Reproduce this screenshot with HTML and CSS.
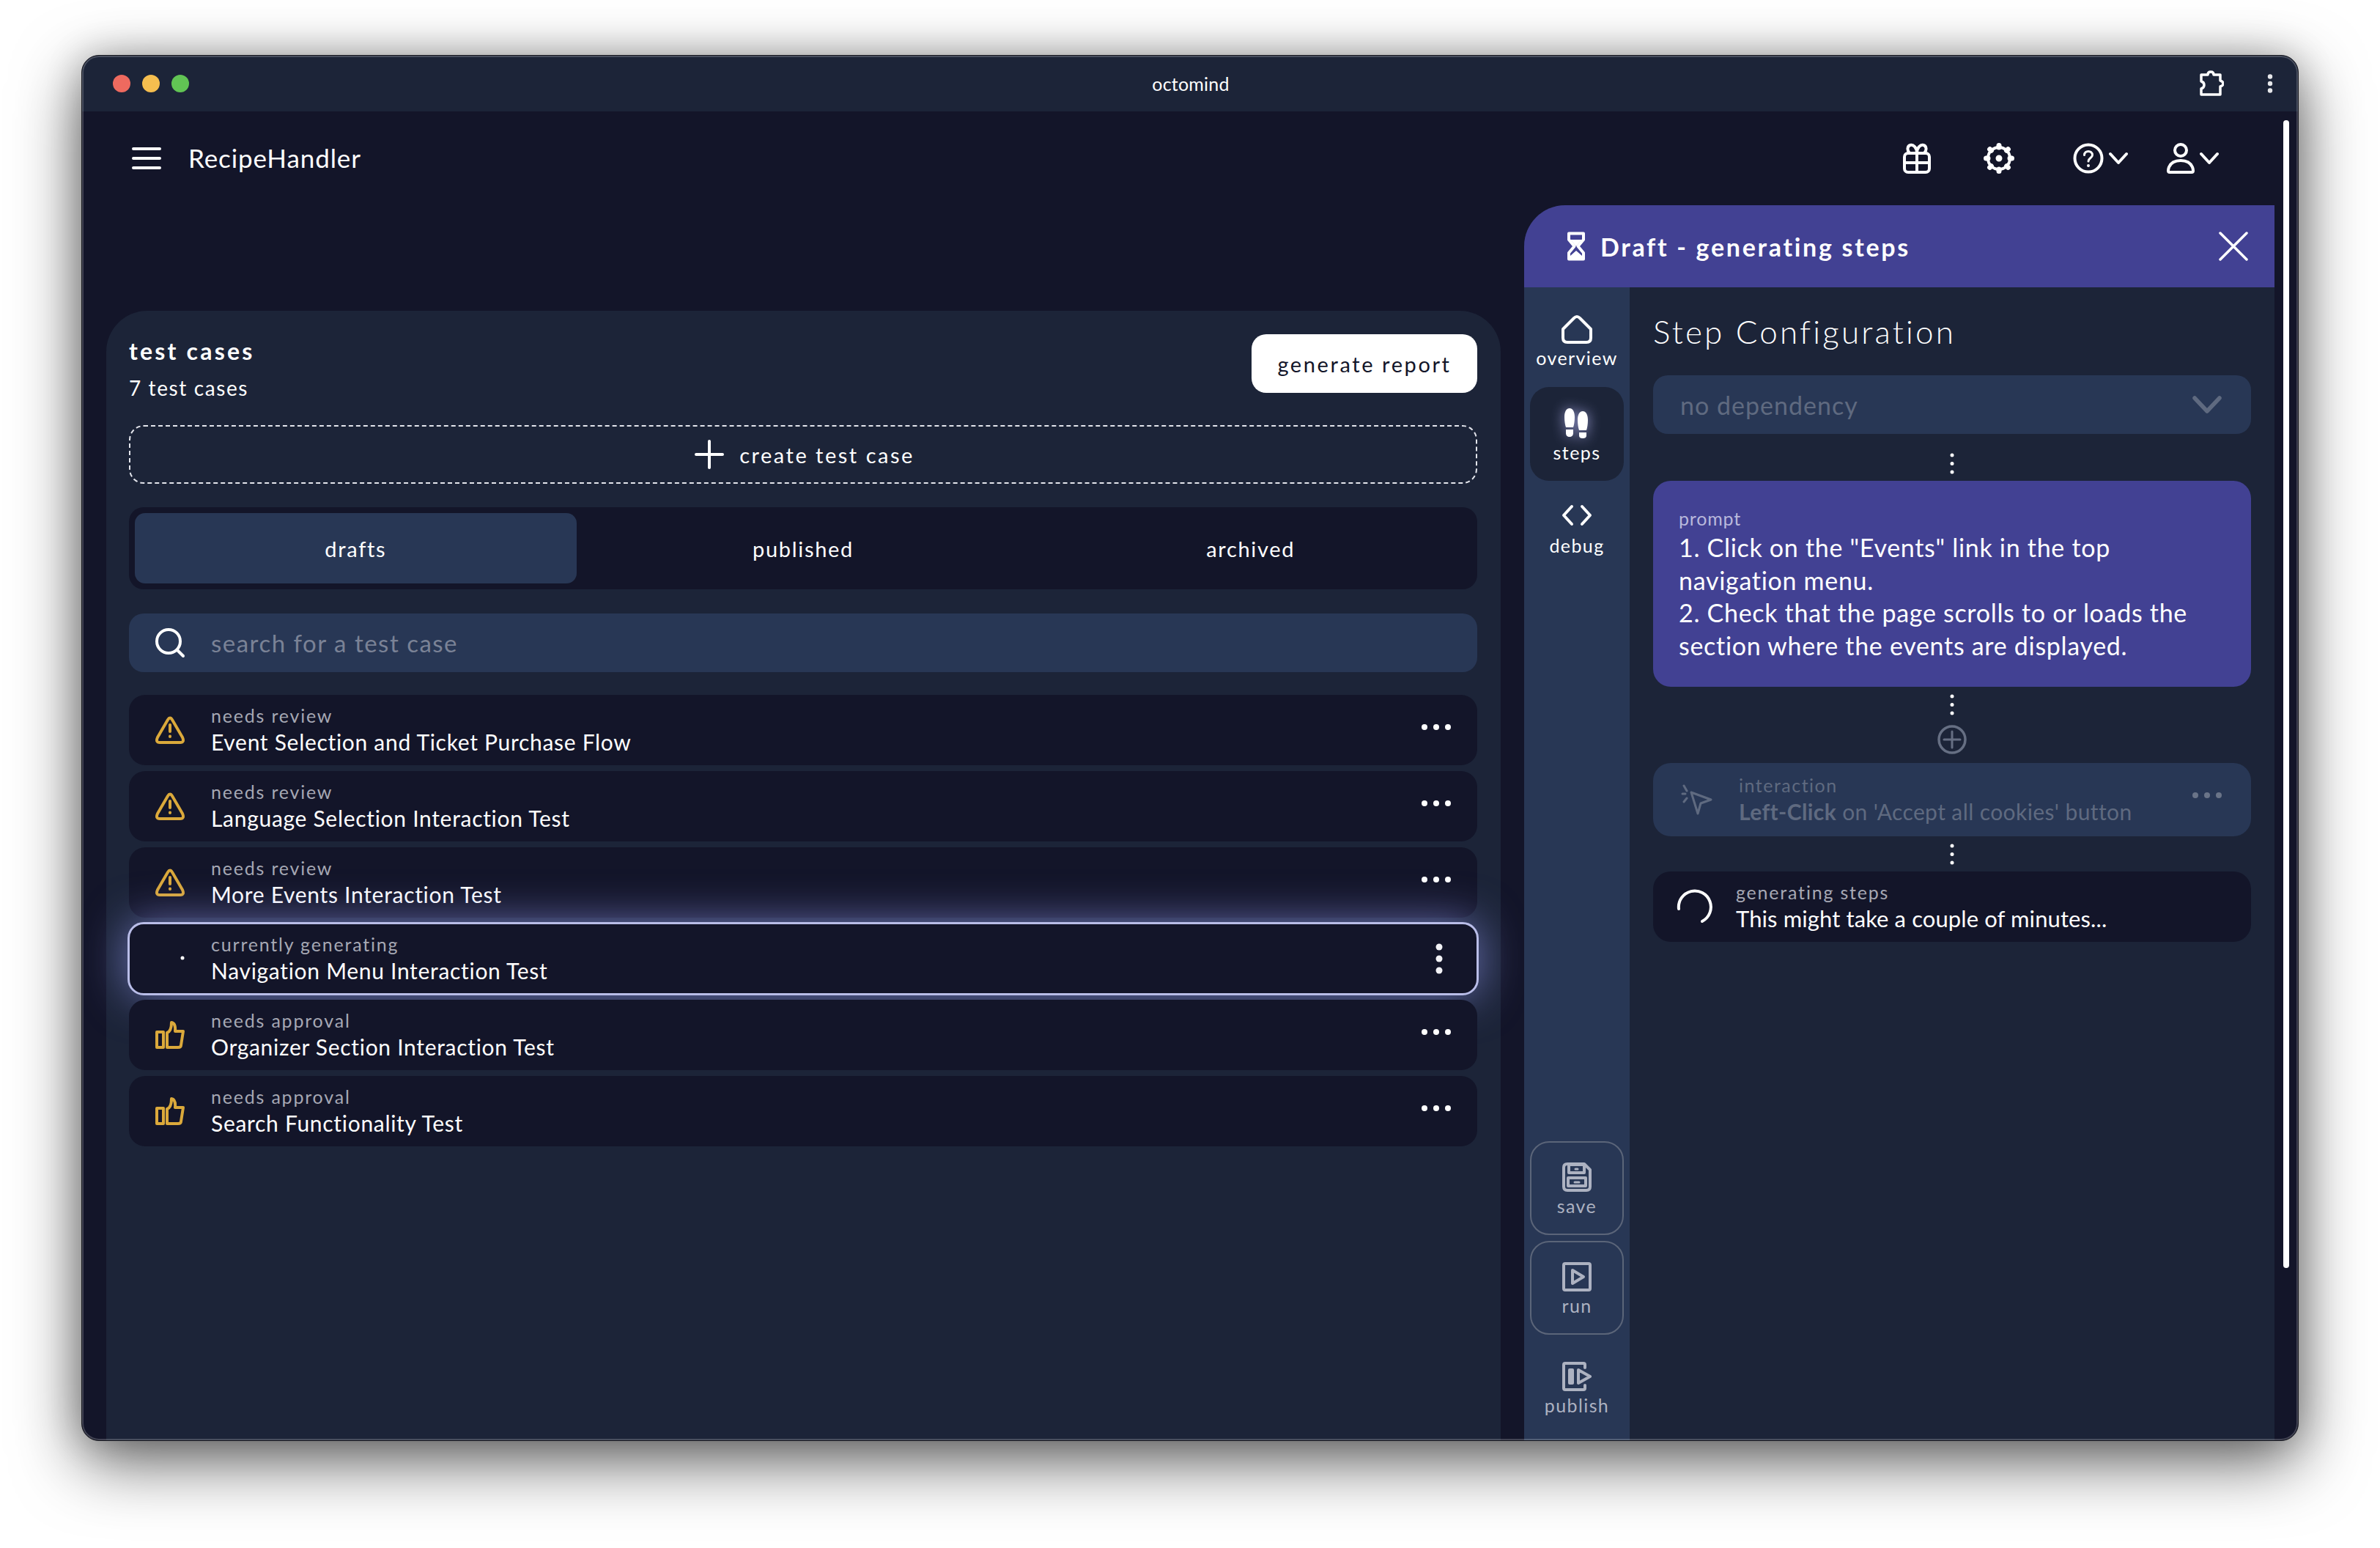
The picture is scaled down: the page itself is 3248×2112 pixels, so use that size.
FILE: index.html
```html
<!DOCTYPE html>
<html lang="en">
<head>
<meta charset="utf-8">
<title>octomind</title>
<link rel="stylesheet" href="styles.css">
</head>
<body>
<div class="window">
  <div class="titlebar">
    <div class="lights"><span class="light red"></span><span class="light yellow"></span><span class="light green"></span></div>
    <div class="win-title">octomind</div>
    <div class="win-tools">
      <svg class="ic puzzle" width="34" height="36" viewBox="0 0 34 36"><path d="M3 6H12Q12 2 16 2T20 6H29V14Q33 15 33 18T29 22V33H3V25Q7 24 7 20T3 15Z"/></svg>
      <svg class="vdots" width="8" height="26" viewBox="0 0 8 26"><circle cx="4" cy="3.5" r="3.2"/><circle cx="4" cy="13" r="3.2"/><circle cx="4" cy="22.5" r="3.2"/></svg>
    </div>
  </div>
  <div class="scrollbar"></div>
  <header class="appbar">
    <svg class="ic hamburger" width="40" height="32" viewBox="0 0 40 32"><path d="M2 3H38M2 16H38M2 29H38"/></svg>
    <div class="app-name">RecipeHandler</div>
    <div class="app-tools">
      <svg class="ic gift" width="38" height="42" viewBox="0 0 38 42"><rect x="2" y="14" width="34" height="26" rx="5"/><path d="M2 27H36M19 14V40M19 14C19 6 14 2 10 3C6 4 5 10 9 14M19 14C19 6 24 2 28 3C32 4 33 10 29 14"/></svg>
      <svg class="ic gear" width="42" height="42" viewBox="0 0 42 42"><circle cx="21" cy="21" r="15"/><circle class="solid" cx="21" cy="21" r="3.500"/><path class="teeth" d="M21 3.500V6M21 38.500V36M3.500 21H6M38.500 21H36M8.600 8.600L10.400 10.400M33.400 33.400L31.600 31.600M8.600 33.400L10.400 31.600M33.400 8.600L31.600 10.400"/></svg>
      <div class="tool-group help">
        <svg class="ic" width="42" height="42" viewBox="0 0 42 42"><circle cx="21" cy="21" r="18.500"/><path class="thin" d="M15.500 16.500C15.500 9.500 26.500 10 26.500 16.500C26.500 20.500 21 20.500 21 25"/><circle class="solid" cx="21" cy="31" r="1"/></svg>
        <svg class="ic chev" width="26" height="18" viewBox="0 0 26 18"><path d="M2 3L13 15L24 3"/></svg>
      </div>
      <div class="tool-group">
        <svg class="ic" width="38" height="42" viewBox="0 0 38 42"><circle cx="19" cy="10" r="8"/><path d="M4 40C1 40 2 36 3 33C6 26 12 24 19 24S32 26 35 33C36 36 37 40 34 40Z"/></svg>
        <svg class="ic chev" width="26" height="18" viewBox="0 0 26 18"><path d="M2 3L13 15L24 3"/></svg>
      </div>
    </div>
  </header>
  <main class="main">
    <section class="cases">
      <div class="cases-head">
        <div>
          <h1 class="cases-title">test cases</h1>
          <p class="cases-count">7 test cases</p>
        </div>
        <button class="btn-report">generate report</button>
      </div>
      <div class="create">
        <svg class="ic plus" width="40" height="40" viewBox="0 0 40 40"><path d="M20 2V38M2 20H38"/></svg>
        <span>create test case</span>
      </div>
      <div class="tabs">
        <div class="tab active">drafts</div>
        <div class="tab">published</div>
        <div class="tab">archived</div>
      </div>
      <div class="search">
        <svg class="ic" width="42" height="42" viewBox="0 0 42 42"><circle cx="19" cy="19" r="16"/><path d="M31 31L39 39"/></svg>
        <span>search for a test case</span>
      </div>
      <div class="rows">
        <div class="row">
          <svg class="ic status" width="40" height="38" viewBox="0 0 40 38"><path d="M17 5L3 29Q0 36 6 36H34Q40 36 37 29L23 5Q20 0 17 5Z"/><path d="M20 12V21M20 27.500V28"/></svg>
          <div class="row-text"><div class="row-label">needs review</div><div class="row-title">Event Selection and Ticket Purchase Flow</div></div>
          <svg class="hdots" width="40" height="8" viewBox="0 0 40 8"><circle cx="4" cy="4" r="4"/><circle cx="20" cy="4" r="4"/><circle cx="36" cy="4" r="4"/></svg>
        </div>
        <div class="row">
          <svg class="ic status" width="40" height="38" viewBox="0 0 40 38"><path d="M17 5L3 29Q0 36 6 36H34Q40 36 37 29L23 5Q20 0 17 5Z"/><path d="M20 12V21M20 27.500V28"/></svg>
          <div class="row-text"><div class="row-label">needs review</div><div class="row-title">Language Selection Interaction Test</div></div>
          <svg class="hdots" width="40" height="8" viewBox="0 0 40 8"><circle cx="4" cy="4" r="4"/><circle cx="20" cy="4" r="4"/><circle cx="36" cy="4" r="4"/></svg>
        </div>
        <div class="row">
          <svg class="ic status" width="40" height="38" viewBox="0 0 40 38"><path d="M17 5L3 29Q0 36 6 36H34Q40 36 37 29L23 5Q20 0 17 5Z"/><path d="M20 12V21M20 27.500V28"/></svg>
          <div class="row-text"><div class="row-label">needs review</div><div class="row-title">More Events Interaction Test</div></div>
          <svg class="hdots" width="40" height="8" viewBox="0 0 40 8"><circle cx="4" cy="4" r="4"/><circle cx="20" cy="4" r="4"/><circle cx="36" cy="4" r="4"/></svg>
        </div>
        <div class="row current">
          <svg class="status speck" width="40" height="38" viewBox="0 0 40 38"><circle cx="37" cy="18" r="2.500"/></svg>
          <div class="row-text"><div class="row-label">currently generating</div><div class="row-title">Navigation Menu Interaction Test</div></div>
          <svg class="vdots-row" width="10" height="42" viewBox="0 0 10 42"><circle cx="5" cy="5" r="4.500"/><circle cx="5" cy="21" r="4.500"/><circle cx="5" cy="37" r="4.500"/></svg>
        </div>
        <div class="row">
          <svg class="ic status" width="40" height="38" viewBox="0 0 40 38"><rect x="2" y="15" width="9" height="21"/><path d="M16 36V16Q22 14 22 2Q28 3 27 14H38L35 33Q35 36 31 36Z"/></svg>
          <div class="row-text"><div class="row-label">needs approval</div><div class="row-title">Organizer Section Interaction Test</div></div>
          <svg class="hdots" width="40" height="8" viewBox="0 0 40 8"><circle cx="4" cy="4" r="4"/><circle cx="20" cy="4" r="4"/><circle cx="36" cy="4" r="4"/></svg>
        </div>
        <div class="row">
          <svg class="ic status" width="40" height="38" viewBox="0 0 40 38"><rect x="2" y="15" width="9" height="21"/><path d="M16 36V16Q22 14 22 2Q28 3 27 14H38L35 33Q35 36 31 36Z"/></svg>
          <div class="row-text"><div class="row-label">needs approval</div><div class="row-title">Search Functionality Test</div></div>
          <svg class="hdots" width="40" height="8" viewBox="0 0 40 8"><circle cx="4" cy="4" r="4"/><circle cx="20" cy="4" r="4"/><circle cx="36" cy="4" r="4"/></svg>
        </div>
      </div>
    </section>
    <aside class="panel">
      <div class="panel-head">
        <svg class="hourglass" width="26" height="40" viewBox="0 0 26 40"><path class="hg-line" d="M3 2.500H23V11L15.500 20L23 29V37.500H3V29L10.500 20L3 11Z"/><path d="M5 11H21L13 20ZM5 37V33L13 26L21 33V37Z"/></svg>
        <div class="panel-title">Draft - generating steps</div>
        <svg class="ic close" width="40" height="40" viewBox="0 0 40 40"><path d="M2 2L38 38M38 2L2 38"/></svg>
      </div>
      <div class="panel-body">
        <nav class="rail">
          <div class="rail-group">
            <div class="rail-item">
              <svg class="ic" width="42" height="40" viewBox="0 0 42 40"><path d="M2 20L17 5Q21 1 25 5L40 20V32Q40 38 34 38H8Q2 38 2 32Z"/></svg>
              <span>overview</span>
            </div>
            <div class="rail-item selected">
              <svg class="feet" width="36" height="42" viewBox="0 0 36 42"><path d="M1 13C1 5 4 1 8 1S15 5 15 13C15 19 14 24 13 27H3C2 24 1 19 1 13ZM3 30H13V35C13 38 11 40 8 40S3 38 3 35Z"/><path d="M19 17C19 9 22 5 26 5S33 9 33 17C33 23 32 28 31 31H21C20 28 19 23 19 17ZM21 34H31V38C31 41 29 42 26 42S21 41 21 38Z"/></svg>
              <span>steps</span>
            </div>
            <div class="rail-item">
              <svg class="ic" width="42" height="40" viewBox="0 0 42 40"><path d="M14 6L3 18L14 30M28 6L39 18L28 30"/></svg>
              <span>debug</span>
            </div>
          </div>
          <div class="rail-group bottom">
            <div class="rail-item boxed">
              <svg class="ic" width="40" height="40" viewBox="0 0 40 40"><path d="M7 2H30L38 10V33Q38 38 33 38H7Q2 38 2 33V7Q2 2 7 2Z"/><rect x="9" y="3" width="21" height="11"/><rect x="8" y="21" width="24" height="11"/><path class="thin" d="M18 9H21M17 27H23"/></svg>
              <span>save</span>
            </div>
            <div class="rail-item boxed">
              <svg class="ic" width="40" height="40" viewBox="0 0 40 40"><rect x="2" y="2" width="36" height="36" rx="2"/><path d="M14 11L29 20L14 29Z"/></svg>
              <span>run</span>
            </div>
            <div class="rail-item muted">
              <svg class="ic" width="40" height="40" viewBox="0 0 40 40"><path d="M31 8V4Q31 2 29 2H4Q2 2 2 4V36Q2 38 4 38H29Q31 38 31 36V32"/><path d="M10 11H14V29H10ZM22 11L38 20L22 29Z"/></svg>
              <span>publish</span>
            </div>
          </div>
        </nav>
        <div class="config">
          <h2 class="config-title">Step Configuration</h2>
          <div class="select">
            <span>no dependency</span>
            <svg class="ic" width="40" height="24" viewBox="0 0 40 24"><path d="M3 3L20 21L37 3"/></svg>
          </div>
          <svg class="link first" width="6" height="29" viewBox="0 0 6 29"><circle cx="3" cy="3" r="2.500"/><circle cx="3" cy="14.500" r="2.500"/><circle cx="3" cy="26" r="2.500"/></svg>
          <div class="prompt">
            <div class="prompt-label">prompt</div>
            <div class="prompt-text">1. Click on the "Events" link in the top<br>navigation menu.<br>2. Check that the page scrolls to or loads the<br>section where the events are displayed.</div>
          </div>
          <svg class="link" width="6" height="29" viewBox="0 0 6 29"><circle cx="3" cy="3" r="2.500"/><circle cx="3" cy="14.500" r="2.500"/><circle cx="3" cy="26" r="2.500"/></svg>
          <svg class="ic add" width="40" height="40" viewBox="0 0 40 40"><circle cx="20" cy="20" r="18"/><path class="thin" d="M20 9V31M9 20H31"/></svg>
          <div class="step-card">
            <svg class="ic cursor" width="46" height="42" viewBox="0 0 46 42"><path class="thin" d="M14 11L41 21L27 26L23 40Z"/><path class="thin" d="M4 2L8 9M2 13H6M4 24L8 19"/></svg>
            <div class="step-text"><div class="step-label">interaction</div><div class="step-desc"><b>Left-Click</b> on 'Accept all cookies' button</div></div>
            <svg class="step-dots" width="40" height="8" viewBox="0 0 40 8"><circle cx="4" cy="4" r="4"/><circle cx="20" cy="4" r="4"/><circle cx="36" cy="4" r="4"/></svg>
          </div>
          <svg class="link" width="6" height="29" viewBox="0 0 6 29"><circle cx="3" cy="3" r="2.500"/><circle cx="3" cy="14.500" r="2.500"/><circle cx="3" cy="26" r="2.500"/></svg>
          <div class="gen-card">
            <svg class="ic spinner" width="50" height="50" viewBox="0 0 50 50"><path d="M3 28A22 22 0 1 1 35 45"/></svg>
            <div><div class="gen-label">generating steps</div><div class="gen-text">This might take a couple of minutes...</div></div>
          </div>
        </div>
      </div>
    </aside>
  </main>
</div>
</body>
</html>
```
FILE: styles.css
```css
* { box-sizing: border-box; }
html, body { margin: 0; height: 100%; }
body {
  background: #fff;
  padding: 75px 111px 146px;
  font-family: "Lato", "Noto Sans", sans-serif;
  color: #fff;
}
h1, h2, p { margin: 0; font-weight: inherit; font-size: inherit; }
button { font: inherit; border: 0; }
svg { display: block; flex: none; }

.ic { fill: none; stroke: currentColor; stroke-width: 4; stroke-linecap: round; stroke-linejoin: round; }
.ic .thin { stroke-width: 3; }
.ic .solid { fill: currentColor; stroke-width: 2; }

.window {
  position: relative;
  width: 3026px;
  height: 1891px;
  border: 1px solid #17181f;
  border-radius: 24px;
  background: #131529;
  box-shadow: 0 28px 90px rgba(0,0,0,.62), 0 0 50px rgba(0,0,0,.2);
  display: flex;
  flex-direction: column;
  overflow: hidden;
}
.window::after {
  content: "";
  position: absolute;
  inset: 0;
  border: 2px solid rgba(255,255,255,.2);
  border-radius: 23px;
  pointer-events: none;
}

.titlebar {
  flex: none;
  height: 76px;
  background: #1c2438;
  display: flex;
  align-items: center;
  padding: 0 34px;
  position: relative;
}
.lights { display: flex; gap: 16px; flex: 1; padding-left: 8px; }
.light { width: 24px; height: 24px; border-radius: 50%; }
.red { background: #ee6a5f; }
.yellow { background: #f5be4f; }
.green { background: #61c454; }
.win-title { font-size: 25px; letter-spacing: .2px; flex: none; padding-right: 6px; }
.win-tools { flex: 1; display: flex; align-items: center; justify-content: flex-end; gap: 59px; }
.ic.puzzle { stroke-width: 3.5; }
.vdots { fill: #e6e7ea; }

.scrollbar {
  position: absolute;
  left: 3004px;
  top: 88px;
  width: 8px;
  height: 1566px;
  border-radius: 4px;
  background: #fff;
  z-index: 2;
}

.appbar {
  flex: none;
  height: 128px;
  display: flex;
  align-items: center;
  padding: 0 108px 0 68px;
}
.app-name { font-size: 35px; margin-left: 37px; letter-spacing: .9px; margin-bottom: 2px; }
.app-tools { margin-left: auto; display: flex; align-items: center; }
.app-tools .gift { margin-right: 72px; }
.app-tools .gear { margin-right: 80px; }
.gear .teeth { stroke-width: 7; }
.tool-group { display: flex; align-items: center; gap: 7px; }
.tool-group.help { margin-right: 53px; }

.main { flex: 1; min-height: 0; display: flex; gap: 32px; padding-left: 33px; padding-right: 32px; }

.cases {
  flex: 1;
  margin-top: 144px;
  background: #1c2438;
  border-radius: 56px 56px 0 0;
  padding: 32px 32px 0 31px;
  min-width: 0;
}
.cases-head { display: flex; justify-content: space-between; align-items: flex-start; height: 80px; }
.cases-title { font-size: 32px; font-weight: 700; letter-spacing: 3.200px; line-height: 44px; margin-top: 1px; }
.cases-count { font-size: 28px; letter-spacing: 1.600px; line-height: 40px; margin-top: 8px; }
.btn-report {
  width: 308px;
  height: 80px;
  background: #fff;
  color: #131529;
  border-radius: 20px;
  font-size: 29px;
  letter-spacing: 2.600px;
}
.create {
  margin-top: 44px;
  height: 80px;
  border: 2px dashed #e3e5ec;
  border-radius: 20px;
  display: flex;
  align-items: center;
  justify-content: center;
  gap: 21px;
  font-size: 29px;
  letter-spacing: 2.500px;
  padding-left: 4px;
}
.tabs {
  margin-top: 32px;
  height: 112px;
  background: #131529;
  border-radius: 20px;
  padding: 8px;
  display: flex;
  gap: 8px;
}
.tab { flex: 1; display: flex; align-items: center; justify-content: center; font-size: 29px; letter-spacing: 1.700px; border-radius: 14px; }
.tab.active { background: #283755; }
.search {
  margin-top: 33px;
  height: 80px;
  background: #283755;
  border-radius: 20px;
  display: flex;
  align-items: center;
  padding-left: 35px;
  gap: 35px;
  font-size: 33px;
  letter-spacing: 1.500px;
  color: #7a8296;
}
.search .ic { color: #fff; }
.rows { margin-top: 31px; display: flex; flex-direction: column; gap: 8px; }
.row {
  height: 96px;
  background: #131529;
  border-radius: 22px;
  display: flex;
  align-items: center;
  padding: 0 36px;
  gap: 36px;
  color: #fff;
}
.row .status { color: #dba93b; }
.row.current {
  height: 100px;
  margin: -2px;
  border: 3px solid #b9bde8;
  padding: 0 35px;
  box-shadow: 0 0 60px rgba(140,145,230,.7);
}
.speck { fill: #fff; }
.row-text { flex: 1; min-width: 0; }
.row-label { font-size: 25px; line-height: 32px; letter-spacing: 1.800px; color: #a6a8b4; }
.row-title { font-size: 30px; line-height: 40px; letter-spacing: .7px; }
.hdots { fill: #fff; margin-bottom: 8px; }
.vdots-row { fill: #f2f2f6; margin-right: 11px; }

.panel {
  flex: none;
  width: 1024px;
  display: flex;
  flex-direction: column;
  border-radius: 56px 0 0 0;
  overflow: hidden;
  background: #1c2438;
}
.panel-head {
  flex: none;
  height: 112px;
  background: #424193;
  display: flex;
  align-items: center;
  padding: 0 36px 0 58px;
}
.panel-title { font-size: 34px; font-weight: 700; letter-spacing: 2.700px; margin-left: 20px; }
.hourglass { fill: #fff; }
.hg-line { fill: none; stroke: #fff; stroke-width: 4; stroke-linecap: round; stroke-linejoin: round; }
.close { margin-left: auto; stroke-width: 3.5; }
.panel-body { flex: 1; min-height: 0; display: flex; }

.rail {
  flex: none;
  width: 144px;
  background: #283755;
  padding: 8px;
  display: flex;
  flex-direction: column;
  justify-content: space-between;
}
.rail-group { display: flex; flex-direction: column; }
.rail-group.bottom { gap: 8px; }
.rail-item {
  height: 128px;
  display: flex;
  flex-direction: column;
  align-items: center;
  justify-content: center;
  gap: 4px;
  padding-top: 3px;
  font-size: 25px;
  letter-spacing: 1.400px;
  line-height: 30px;
  border-radius: 26px;
}
.rail-item.selected { background: #1c2438; }
.feet { fill: #fff; filter: drop-shadow(0 0 9px rgba(190,190,255,.75)); }
.rail-item.boxed { border: 2px solid #5b6579; color: #adb2c1; }
.rail-item.muted { color: #adb2c1; }

.config { flex: 1; min-width: 0; padding: 32px 32px 0; display: flex; flex-direction: column; align-items: center; }
.config-title { align-self: stretch; font-size: 44px; line-height: 56px; letter-spacing: 3.200px; font-weight: 300; }
.select {
  align-self: stretch;
  margin-top: 32px;
  height: 80px;
  flex: none;
  background: #283755;
  border-radius: 20px;
  display: flex;
  align-items: center;
  justify-content: space-between;
  padding: 0 40px 0 37px;
  font-size: 34px;
  letter-spacing: 1px;
  color: #5f6a80;
}
.select .ic { stroke-width: 5.5; }
.link { fill: #fff; margin: 10px 0 9px; }
.link.first { margin-top: 26px; margin-bottom: 9px; }
.prompt {
  align-self: stretch;
  background: #424193;
  border-radius: 24px;
  padding: 34px 35px;
  flex: none;
}
.prompt-label { font-size: 25px; line-height: 35px; letter-spacing: .8px; color: #b9b9dc; }
.prompt-text { font-size: 34px; line-height: 44.500px; letter-spacing: .7px; }
.add { color: #666f83; margin-bottom: 12px; margin-top: 4px; stroke-width: 3.500; }
.step-card {
  align-self: stretch;
  flex: none;
  height: 100px;
  background: #283755;
  border-radius: 24px;
  display: flex;
  align-items: center;
  padding: 0 40px 0 38px;
  gap: 33px;
  color: #5f6a80;
}
.cursor { color: #5f6a80; }
.step-text { flex: 1; }
.step-label { font-size: 25px; line-height: 32px; letter-spacing: 1.500px; }
.step-desc { font-size: 30px; line-height: 40px; letter-spacing: .4px; }
.step-desc b { font-weight: 700; }
.step-dots { fill: #6a7488; margin-bottom: 12px; }
.gen-card {
  align-self: stretch;
  flex: none;
  height: 96px;
  background: #131529;
  border-radius: 24px;
  display: flex;
  align-items: center;
  padding-left: 32px;
  gap: 31px;
}
.gen-label { font-size: 25px; line-height: 32px; letter-spacing: 1.800px; color: #a6a8b4; }
.gen-text { font-size: 31px; line-height: 40px; letter-spacing: .1px; }
```
